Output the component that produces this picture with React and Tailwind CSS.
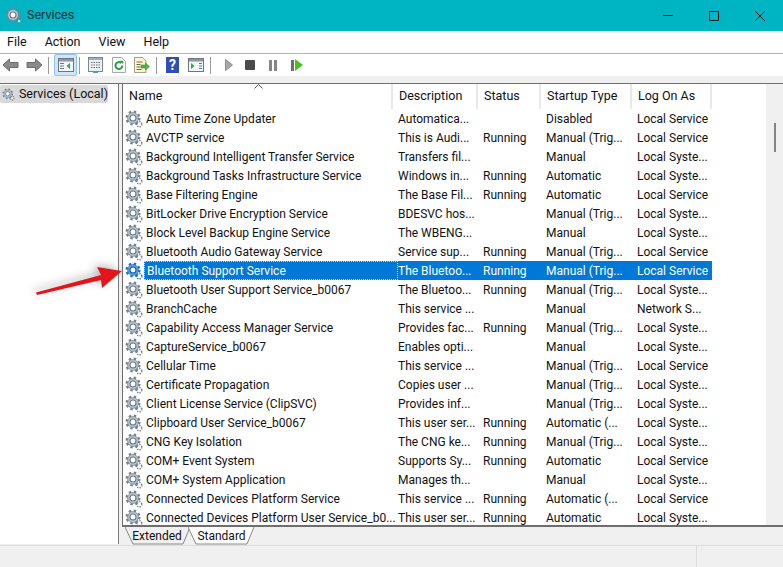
import React from 'react'

const services = [
  ['Auto Time Zone Updater', 'Automatica...', '', 'Disabled', 'Local Service'],
  ['AVCTP service', 'This is Audi...', 'Running', 'Manual (Trig...', 'Local Service'],
  ['Background Intelligent Transfer Service', 'Transfers fil...', '', 'Manual', 'Local Syste...'],
  ['Background Tasks Infrastructure Service', 'Windows in...', 'Running', 'Automatic', 'Local Syste...'],
  ['Base Filtering Engine', 'The Base Fil...', 'Running', 'Automatic', 'Local Service'],
  ['BitLocker Drive Encryption Service', 'BDESVC hos...', '', 'Manual (Trig...', 'Local Syste...'],
  ['Block Level Backup Engine Service', 'The WBENG...', '', 'Manual', 'Local Syste...'],
  ['Bluetooth Audio Gateway Service', 'Service sup...', 'Running', 'Manual (Trig...', 'Local Service'],
  ['Bluetooth Support Service', 'The Bluetoo...', 'Running', 'Manual (Trig...', 'Local Service'],
  ['Bluetooth User Support Service_b0067', 'The Bluetoo...', 'Running', 'Manual (Trig...', 'Local Syste...'],
  ['BranchCache', 'This service ...', '', 'Manual', 'Network S...'],
  ['Capability Access Manager Service', 'Provides fac...', 'Running', 'Manual (Trig...', 'Local Syste...'],
  ['CaptureService_b0067', 'Enables opti...', '', 'Manual', 'Local Syste...'],
  ['Cellular Time', 'This service ...', '', 'Manual (Trig...', 'Local Service'],
  ['Certificate Propagation', 'Copies user ...', '', 'Manual (Trig...', 'Local Syste...'],
  ['Client License Service (ClipSVC)', 'Provides inf...', '', 'Manual (Trig...', 'Local Syste...'],
  ['Clipboard User Service_b0067', 'This user ser...', 'Running', 'Automatic (...', 'Local Syste...'],
  ['CNG Key Isolation', 'The CNG ke...', 'Running', 'Manual (Trig...', 'Local Syste...'],
  ['COM+ Event System', 'Supports Sy...', 'Running', 'Automatic', 'Local Service'],
  ['COM+ System Application', 'Manages th...', '', 'Manual', 'Local Syste...'],
  ['Connected Devices Platform Service', 'This service ...', 'Running', 'Automatic (...', 'Local Service'],
  ['Connected Devices Platform User Service_b0...', 'This user ser...', 'Running', 'Automatic', 'Local Syste...'],
]

const Gear = ({ selected = false, className = 'w-[18px] h-[18px]' }) => {
  const dark = selected ? '#1f6fc0' : '#75818e'
  const mid = selected ? '#5aa2e6' : '#b9c6d4'
  const hub = selected ? '#0f5fb5' : '#6c7a8a'
  return (
    <svg viewBox="0 0 18 18" className={className}>
      <circle cx="8" cy="8" r="6.3" fill="none" stroke={dark} strokeWidth="2.4" strokeDasharray="2.4 2.55" />
      <circle cx="8" cy="8" r="5.4" fill={mid} stroke={dark} strokeWidth="0.7" />
      <circle cx="8" cy="8" r="3" fill="#ffffff" stroke={hub} strokeWidth="1.1" />
      <circle cx="14.2" cy="14.2" r="2.6" fill="none" stroke={dark} strokeWidth="1.5" strokeDasharray="1.3 1.1" />
      <circle cx="14.2" cy="14.2" r="1.1" fill="#ffffff" />
    </svg>
  )
}

const Row = ({ row }) => {
  const selected = row[0] === 'Bluetooth Support Service'
  return (
    <div className="flex h-[19px] items-center">
      <div className="flex w-[21px] shrink-0 justify-end pr-px">
        <Gear selected={selected} />
      </div>
      <div className={`flex h-[19px] w-[568px] items-center ${selected ? 'bg-[#0078d7] text-white' : ''}`}>
        <div className={`flex h-[19px] w-[254px] shrink-0 items-center pl-[2px] ${selected ? 'border border-dotted border-[#f3c98a]' : ''}`}>
          <span className="whitespace-nowrap">{row[0]}</span>
        </div>
        <div className="w-[85px] shrink-0 whitespace-nowrap">{row[1]}</div>
        <div className="w-[63px] shrink-0 whitespace-nowrap">{row[2]}</div>
        <div className="w-[91px] shrink-0 whitespace-nowrap">{row[3]}</div>
        <div className="whitespace-nowrap">{row[4]}</div>
      </div>
    </div>
  )
}

const Separator = () => <div className="mx-[3px] h-[17px] w-px bg-[#9a9a9a]" />

const HeaderCell = ({ label, width }) => (
  <div className={`flex h-[25px] shrink-0 items-center border-r-2 border-[#e9e9e9] pl-[6px] text-[12.5px] ${width}`}>
    {label}
  </div>
)

const Toolbar = () => (
  <div className="flex h-[22px] items-center bg-white pl-[2px]">
    {/* back */}
    <svg viewBox="0 0 17 14" className="h-[14px] w-[17px]">
      <path d="M1 7 7.5 1v3.5H16v5H7.5V13z" fill="#8a8a8a" stroke="#6b6b6b" strokeWidth="1" />
    </svg>
    {/* forward */}
    <svg viewBox="0 0 17 14" className="ml-[7px] h-[14px] w-[17px]">
      <path d="M16 7 9.5 1v3.5H1v5h8.5V13z" fill="#8a8a8a" stroke="#6b6b6b" strokeWidth="1" />
    </svg>
    <div className="ml-[5px] h-[17px] w-px bg-[#9a9a9a]" />
    {/* console tree, toggled on */}
    <div className="ml-[5px] flex h-[22px] w-[23px] items-center justify-center rounded-[2px] border border-[#8fc3ee] bg-[#cfe6f9]">
      <svg viewBox="0 0 16 14" className="h-[14px] w-[16px]">
        <rect x="0.5" y="0.5" width="15" height="13" fill="#f4f7fa" stroke="#6d7580" />
        <rect x="1" y="1" width="14" height="2.5" fill="#8d96a0" />
        <path d="M2 5.5h4M2 8h4M2 10.5h4" stroke="#6d7580" />
        <path d="M12 5v6L8.5 8z" fill="#2ea84a" />
      </svg>
    </div>
    <div className="ml-[2px] h-[17px] w-px bg-[#9a9a9a]" />
    {/* properties */}
    <svg viewBox="0 0 15 16" className="ml-[8px] h-[16px] w-[15px]">
      <rect x="0.5" y="0.5" width="14" height="14" fill="#eef1f4" stroke="#7d8791" />
      <rect x="1" y="1" width="13" height="2" fill="#a4adb6" />
      <path d="M3 5.5h9M3 8h9M3 10.5h9" stroke="#69737d" strokeDasharray="1.5 1" />
      <rect x="5" y="14" width="5" height="2" fill="#28a7ea" />
    </svg>
    {/* refresh */}
    <svg viewBox="0 0 14 16" className="ml-[9px] h-[16px] w-[14px]">
      <path d="M0.5 0.5H9.5L13.5 4.5V15.5H0.5z" fill="#fbfbfb" stroke="#a8a8a8" />
      <path d="M10.3 8.5a3.4 3.4 0 1 1-1-2.4" fill="none" stroke="#2a9d3c" strokeWidth="2" />
      <path d="M7.8 3.8h3.4v3.4z" fill="#2a9d3c" />
    </svg>
    {/* export list */}
    <svg viewBox="0 0 16 16" className="ml-[8px] h-[16px] w-[16px]">
      <path d="M0.5 0.5H8.5L12 4V15.5H0.5z" fill="#fbf4d4" stroke="#a79f80" />
      <path d="M2.5 5h6M2.5 7.5h4M2.5 10h4M2.5 12.5h5" stroke="#6f6a58" />
      <path d="M15.5 9.5 11.5 6v2H7v3h4.5v2z" fill="#4fb83f" stroke="#2d8a2a" strokeWidth="0.5" />
    </svg>
    <div className="ml-[6px] h-[17px] w-px bg-[#9a9a9a]" />
    {/* help */}
    <div className="ml-[9px] flex h-[16px] w-[13px] items-center justify-center bg-[#2f4fb5] text-[14px] leading-none font-bold text-white">
      ?
    </div>
    {/* action pane */}
    <svg viewBox="0 0 16 14" className="ml-[9px] h-[14px] w-[16px]">
      <rect x="0.5" y="0.5" width="15" height="13" fill="#f4f7fa" stroke="#6d7580" />
      <rect x="1" y="1" width="14" height="2.5" fill="#8d96a0" />
      <path d="M11 5.5h3M11 8h3M11 10.5h3" stroke="#3d7fc4" />
      <path d="M3 5v6l3.5-3z" fill="#2ea84a" />
    </svg>
    <div className="ml-[6px] h-[17px] w-px bg-[#9a9a9a]" />
    {/* play */}
    <svg viewBox="0 0 8 12" className="ml-[14px] h-[12px] w-[8px]">
      <path d="M0.5 0.5 7.5 6 0.5 11.5z" fill="#a8a8a8" stroke="#8c8c8c" />
    </svg>
    <div className="ml-[12px] h-[10px] w-[10px] rounded-[1px] bg-[#4a4a4a]" />
    <div className="ml-[14px] flex gap-[2px]">
      <div className="h-[11px] w-[3px] bg-[#858585]" />
      <div className="h-[11px] w-[3px] bg-[#858585]" />
    </div>
    <div className="ml-[14px] flex items-center gap-[1px]">
      <div className="h-[11px] w-[3px] bg-[#6d6d6d]" />
      <svg viewBox="0 0 8 12" className="h-[12px] w-[8px]">
        <path d="M0 0 8 6 0 12z" fill="#46c21f" />
      </svg>
    </div>
  </div>
)

const Tabs = () => (
  <div className="flex h-[18px] items-start pl-[3px]">
    <div className="relative flex h-[18px] w-[65px] items-center justify-center pr-px">
      <svg viewBox="0 0 65 18" className="absolute inset-0 h-[18px] w-[65px]">
        <path d="M0 0 8 17H58L65 0" fill="none" stroke="#8a8a8a" />
      </svg>
      <span className="relative">Extended</span>
    </div>
    <div className="relative ml-[-2px] flex h-[18px] w-[67px] items-center justify-center">
      <svg viewBox="0 0 67 18" className="absolute inset-0 h-[18px] w-[67px]">
        <path d="M0 0 8 17H59L66 0" fill="#ffffff" stroke="#8a8a8a" />
      </svg>
      <span className="relative">Standard</span>
    </div>
  </div>
)

export default function App() {
  return (
    <div className="relative flex h-[567px] w-[783px] flex-col overflow-hidden bg-[#f0f0f0] font-['Roboto','Liberation_Sans',sans-serif] text-[12px] text-[#111]">
      {/* title bar */}
      <div className="flex h-[31px] shrink-0 items-center bg-[#00b5c3] pl-[5px]">
        <Gear className="h-[18px] w-[18px]" />
        <span className="ml-[4px] text-[12.5px] text-[#0b2a2e]">Services</span>
        <div className="ml-auto flex items-center">
          <div className="h-px w-[10px] bg-[#111]" />
          <div className="ml-[36px] h-[10px] w-[10px] rounded-[1px] border border-[#111]" />
          <svg viewBox="0 0 10 10" className="mr-[18px] ml-[36px] h-[10px] w-[10px]">
            <path d="M0 0 10 10M10 0 0 10" stroke="#111" strokeWidth="1" />
          </svg>
        </div>
      </div>

      {/* menu */}
      <div className="flex h-[23px] shrink-0 items-center gap-[18px] border-b border-[#b4b4bc] bg-white pl-[7px] text-[12.5px]">
        <span>File</span>
        <span>Action</span>
        <span>View</span>
        <span>Help</span>
      </div>

      <Toolbar />
      <div className="h-[7px] shrink-0 bg-[#f0f0f0]" />

      {/* panes */}
      <div className="flex min-h-0 flex-1 border-t border-[#6e6e6e]">
        {/* tree */}
        <div className="flex h-[460px] w-[119px] shrink-0 flex-col border-r border-[#7a7a7a] bg-white pt-px">
          <div className="flex h-[18px] w-[108px] items-center rounded-[2px] bg-[#d9d9d9] pl-[2px]">
            <Gear className="h-[17px] w-[17px]" />
            <span className="ml-[4px] text-[12.5px] whitespace-nowrap">Services (Local)</span>
          </div>
        </div>
        <div className="w-[3px] shrink-0" />

        {/* list */}
        <div className="flex min-w-0 flex-1 flex-col">
          <div className="flex h-[443px] border-b-2 border-l border-[#6e6e6e] bg-white">
            <div className="min-w-0 flex-1 overflow-hidden">
              <div className="relative flex h-[25px]">
                <HeaderCell label="Name" width="w-[270px]" />
                <HeaderCell label="Description" width="w-[85px]" />
                <HeaderCell label="Status" width="w-[63px]" />
                <HeaderCell label="Startup Type" width="w-[91px]" />
                <HeaderCell label="Log On As" width="w-[80px]" />
                <svg viewBox="0 0 9 5" className="absolute top-0 left-[131px] h-[5px] w-[9px]">
                  <path d="M0.5 4.5 4.5 0.5 8.5 4.5" fill="none" stroke="#555" />
                </svg>
              </div>
              <div className="relative">
                {services.map((row) => (
                  <Row key={row[0]} row={row} />
                ))}
              </div>
            </div>
            {/* scrollbar */}
            <div className="flex w-[17px] shrink-0 justify-center bg-[#f0f0f0] pt-[39px]">
              <div className="h-[29px] w-[2px] bg-[#858585]" />
            </div>
          </div>
          <Tabs />
        </div>
      </div>

      {/* status bar */}
      <div className="flex h-[22px] shrink-0 justify-end border-t border-[#dcdcdc] bg-[#f0f0f0]">
        <div className="w-[87px] border-l border-[#dcdcdc]" />
      </div>

      {/* annotation arrow */}
      <svg viewBox="0 0 783 567" className="pointer-events-none absolute inset-0 h-[567px] w-[783px] drop-shadow-[-3px_-2px_4px_rgba(0,0,0,0.3)]">
        <path d="M36 292.5 101 275 97 267 122 271 102 288 101 280 37 295z" fill="#e3151b" />
      </svg>
    </div>
  )
}
